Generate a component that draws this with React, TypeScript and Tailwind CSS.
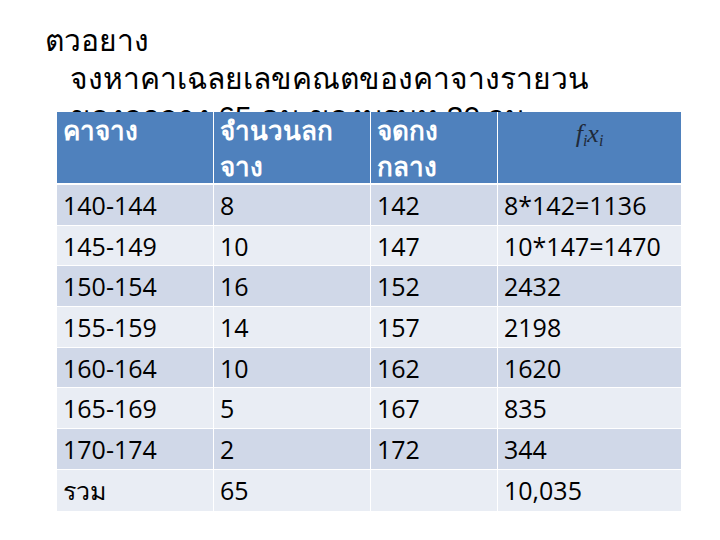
import React from 'react';

const rows = [
  ['140-144', '8', '142', '8*142=1136'],
  ['145-149', '10', '147', '10*147=1470'],
  ['150-154', '16', '152', '2432'],
  ['155-159', '14', '157', '2198'],
  ['160-164', '10', '162', '1620'],
  ['165-169', '5', '167', '835'],
  ['170-174', '2', '172', '344'],
  ['รวม', '65', '', '10,035'],
];

export default function App() {
  return (
    <div
      className="w-[720px] h-[540px] bg-white overflow-hidden"
      style={{ fontFamily: '"Liberation Sans", "Noto Sans", sans-serif' }}
    >
      <div className="pl-[45px] pt-[22px]">
        <div className="text-[30px] leading-[38px] text-black">ตวอยาง</div>
        <div className="pl-[25px] text-[30px] leading-[38px] text-black">จงหาคาเฉลยเลขคณตของคาจางรายวน</div>
        <div className="pl-[25px] text-[30px] leading-[38px] text-black">ของลกจาง 65 คน ของบรษท 30 วน</div>
      </div>

      <div className="relative mt-[-24px] ml-[57px] w-[624px]">
        <div className="grid grid-cols-[156px_157px_127px_184px] bg-[#4f81bd] text-white text-[26px] leading-[36px] h-[73px] border-b-2 border-white">
          <div className="px-[6px] pt-[1px] font-bold">คาจาง</div>
          <div className="px-[6px] pt-[1px] font-bold border-l border-white">จำนวนลก<br />จาง</div>
          <div className="px-[6px] pt-[1px] font-bold border-l border-white">จดกง<br />กลาง</div>
          <div className="px-[6px] pt-[4px] border-l border-white text-center text-[#1f2a3a]" style={{ fontFamily: '"Liberation Serif", serif' }}>
            <span className="italic text-[26px]">f<sub className="text-[16px]">i</sub>x<sub className="text-[16px]">i</sub></span>
          </div>
        </div>
        {rows.map((r, i) => (
          <div
            key={i}
            className={`grid grid-cols-[156px_157px_127px_184px] h-[40.7px] text-[25px] leading-[40px] text-black ${i % 2 === 0 ? 'bg-[#d0d8e8]' : 'bg-[#e9edf4]'} ${i < rows.length - 1 ? 'border-b border-white' : ''}`}
            style={{ fontFamily: '"Open Sans", "Noto Sans", sans-serif' }}
          >
            {r.map((c, j) => (
              <div key={j} className={`px-[6px] ${j > 0 ? 'border-l border-white' : ''}`}>{c}</div>
            ))}
          </div>
        ))}
      </div>
    </div>
  );
}
